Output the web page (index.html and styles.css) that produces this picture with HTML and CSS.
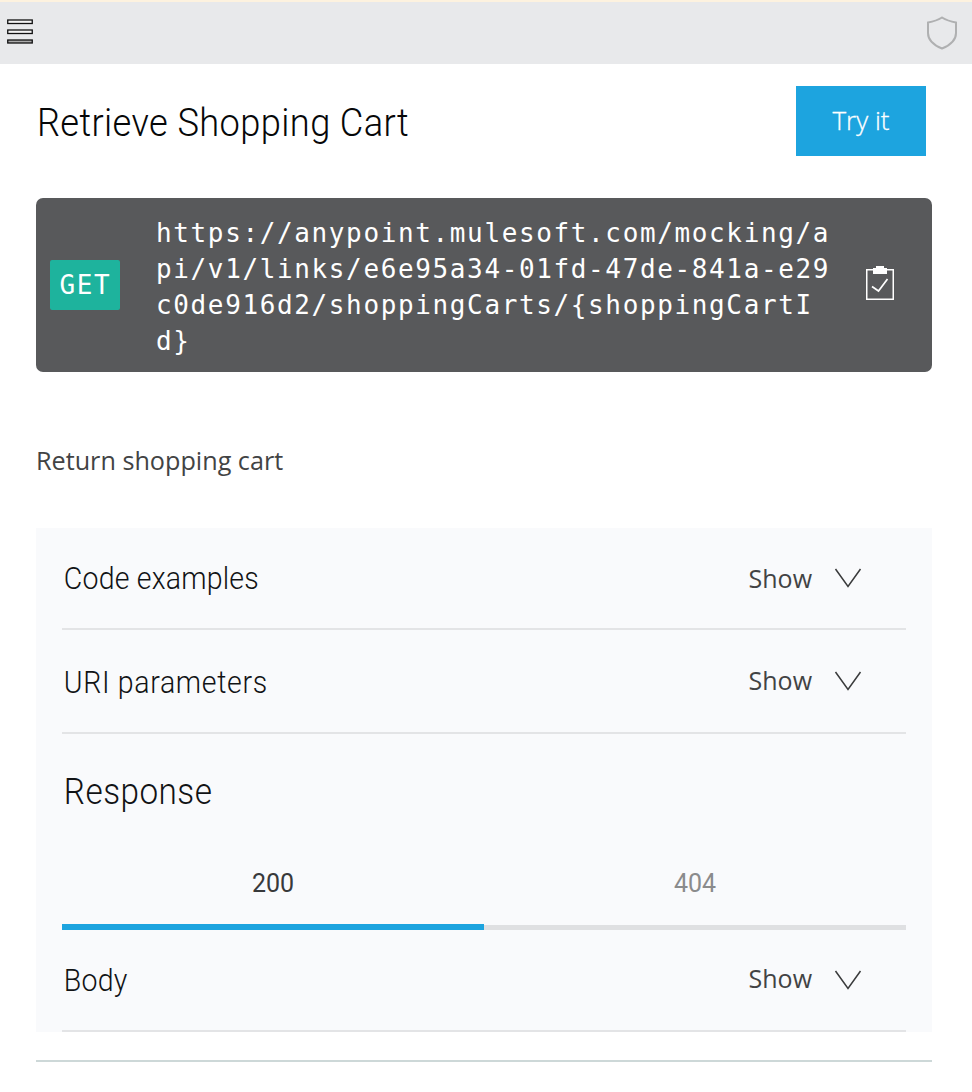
FILE: index.html
```html
<!DOCTYPE html>
<html lang="en">
<head>
<meta charset="utf-8">
<title>Retrieve Shopping Cart</title>
<link rel="stylesheet" href="styles.css">
</head>
<body>
<header class="topbar">
  <svg class="menu" width="26" height="26" viewBox="0 0 26 26"><g fill="#f4f4f4" stroke="#111" stroke-width="1.3"><rect x=".75" y="1" width="24.5" height="3.500"/><rect x=".75" y="11" width="24.5" height="3.500"/><rect x=".75" y="21" width="24.5" height="3" fill="#aaa"/></g></svg>
  <svg class="shield" width="32" height="34" viewBox="0 0 32 34"><path d="M16 1.5C12 4 7 5.6 2 6.500V17C2 24 8 29.3 16 32.5C24 29.3 30 24 30 17V6.500C25 5.6 20 4 16 1.5Z" fill="none" stroke="#afb0b1" stroke-width="2"/></svg>
</header>
<main class="page">
  <div class="title-row">
    <h1 class="title">Retrieve Shopping Cart</h1>
    <button class="try">Try it</button>
  </div>
  <section class="endpoint">
    <span class="method">GET</span>
    <code class="url">https://anypoint.mulesoft.com/mocking/api/v1/links/e6e95a34-01fd-47de-841a-e29c0de916d2/shoppingCarts/{shoppingCartId}</code>
    <svg class="copy" width="28" height="36" viewBox="0 0 28 36"><rect x=".75" y="4.75" width="26.5" height="29.5" fill="none" stroke="#fff" stroke-width="1.5"/><path d="M7 3h3V1h8v2h3v6H7z" fill="#fff"/><path d="M6 21.500L12.500 26L21.500 14" fill="none" stroke="#fff" stroke-width="1.7"/></svg>
  </section>
  <p class="description">Return shopping cart</p>
  <section class="details">
    <div class="row row-code"><h2 class="label label-code">Code examples</h2><span class="show">Show</span><svg class="chevron" width="28" height="20" viewBox="0 0 28 20"><path d="M1.500 1L14 18.500L26.500 1" fill="none" stroke="#3a3b3c" stroke-width="1.5"/></svg></div>
    <div class="row row-uri"><h2 class="label label-uri">URI parameters</h2><span class="show">Show</span><svg class="chevron" width="28" height="20" viewBox="0 0 28 20"><path d="M1.500 1L14 18.500L26.500 1" fill="none" stroke="#3a3b3c" stroke-width="1.5"/></svg></div>
    <h2 class="response">Response</h2>
    <div class="tabs"><div class="tab active">200</div><div class="tab">404</div></div>
    <div class="row row-body"><h2 class="label label-body">Body</h2><span class="show">Show</span><svg class="chevron" width="28" height="20" viewBox="0 0 28 20"><path d="M1.500 1L14 18.500L26.500 1" fill="none" stroke="#3a3b3c" stroke-width="1.5"/></svg></div>
  </section>
  <hr class="end">
</main>
</body>
</html>
```
FILE: styles.css
```css
* { box-sizing: border-box; }
body { margin: 0; background: #fff; color: #424344; font-family: "Open Sans", sans-serif; }
h1, h2, p { margin: 0; font-weight: 300; }
svg { display: block; flex: none; }
.topbar { height: 64px; border-top: 2px solid #fdf2df; background: #e8e9eb; display: flex; justify-content: space-between; align-items: flex-start; padding: 0 14px 0 7px; }
.menu { margin-top: 17px; }
.shield { margin-top: 14px; }
.page { padding: 22px 40px 0 36px; }
.title-row { display: flex; justify-content: space-between; height: 70px; padding-right: 6px; }
.title { font: 300 39px/75px Roboto, sans-serif; letter-spacing: 0.4px; color: #060708; white-space: nowrap; padding-left: 1px; transform: scaleX(0.93); transform-origin: left; }
.try { width: 130px; height: 70px; padding: 0 0 1px; border: 0; background: #1da4df; color: #fff; font: 300 26px/69px "Open Sans", sans-serif; -webkit-text-stroke: 0.3px #fff; }
.endpoint { display: flex; align-items: center; height: 174px; margin-top: 42px; padding: 0 38px 0 14px; border-radius: 7px; background: #58595b; color: #fff; }
.method { width: 70px; height: 50px; border-radius: 2px; background: #1eb39d; font: 26px/51px "DejaVu Sans Mono", monospace; letter-spacing: 1.6px; text-align: center; padding-left: 1px; }
.url { width: 676px; margin: 0 34px 0 36px; padding-top: 4px; font: 26px/36px "DejaVu Sans Mono", monospace; letter-spacing: 1.63px; word-break: break-all; }
.copy { margin-top: -4px; }
.description { margin-top: 68px; height: 88px; font-weight: 400; font-size: 25.2px; line-height: 41px; }
.details { background: #f9fafc; height: 504px; padding: 0 26px; }
.row { display: flex; align-items: center; border-bottom: 2px solid #e3e4e6; padding-right: 44px; }
.row-code { height: 102px; }
.row-uri { height: 104px; }
.row-body { height: 102px; }
.label { flex: 1; font: 300 31px/40px Roboto, sans-serif; color: #111315; padding: 2px 0 0 2px; transform: scaleX(0.92); transform-origin: left; }
.label-code { letter-spacing: 0.2px; }
.label-uri { padding-top: 3px; letter-spacing: 0.7px; }
.label-body { padding-top: 1px; letter-spacing: 0.2px; }
.show { font-size: 25px; line-height: 36px; margin-right: 22px; }
.row-uri .show { padding-bottom: 2px; }
.row-body .show { padding-bottom: 4px; }
.response { font: 300 36px/117px Roboto, sans-serif; height: 104px; color: #111315; padding-left: 2px; letter-spacing: 0.5px; transform: scaleX(0.925); transform-origin: left; }
.tabs { display: flex; height: 92px; }
.tab { flex: 1; border-bottom: 5px solid #dfe0e2; font: 400 25px/92px Roboto, sans-serif; text-align: center; color: #8a8b8c; }
.active { border-bottom: 6px solid #1da4df; color: #38393b; }
.end { margin: 28px 0 0; border: 0; height: 2px; background: #cdd8d8; }
```
